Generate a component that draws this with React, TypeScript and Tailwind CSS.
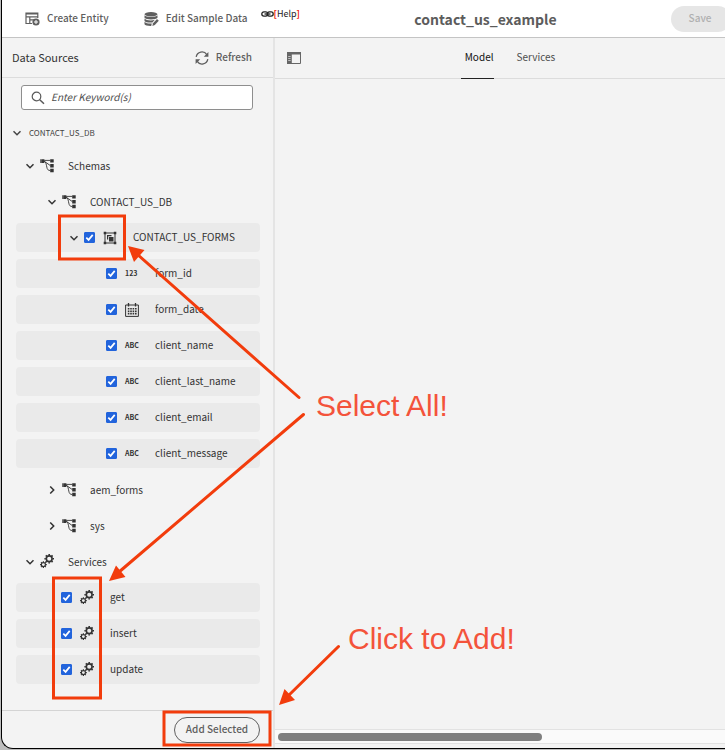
import type { ReactNode } from "react";

type IconProps = { className?: string };

function CreateEntityIcon({ className }: IconProps) {
  return (
    <svg viewBox="0 0 15 14" className={className} fill="none" stroke="currentColor">
      <path d="M7 11.500H1V1h11.800v5M1 2h11.800M1 4.800h11.800M4.800 5v6.500M5 7.800h4" strokeWidth="1.200" />
      <circle cx="11" cy="10" r="3.600" fill="currentColor" stroke="none" />
      <path d="M11 8v4M9 10h4" stroke="#fff" strokeWidth="1" />
    </svg>
  );
}

function SampleDataIcon({ className }: IconProps) {
  return (
    <svg viewBox="0 0 15 14" className={className} fill="currentColor">
      <ellipse cx="7" cy="2.200" rx="6.500" ry="2.200" />
      <path d="M.5 3.300c1.500 2.200 11.500 2.200 13 0v2.500c-1.500 2.300-11.500 2.300-13 0z" />
      <path d="M.5 6.500c1.500 2.100 7.300 2.400 10.300 1.300L8.400 10.500c-3.300.3-6.900 0-7.900-1.500z" />
      <path d="M.5 9.700c1 1.500 4.500 2 7.300 1.800l-.6 2.400C4 14 1 13.400.5 12.200z" />
      <path d="M8.400 13.900l.6-2.700 4-4.200 1.800 1.700-4 4.200z" />
    </svg>
  );
}

function RefreshIcon({ className }: IconProps) {
  return (
    <svg viewBox="0 0 14 14" className={className} fill="none" stroke="currentColor" strokeWidth="1.300">
      <path d="M1.200 5.800A5.800 5.800 0 0 1 11.800 3.600M12.800 8.200A5.800 5.800 0 0 1 2.200 10.400" />
      <path d="M13.400 1v4.800H8.800zM.6 13V8.200h4.600z" fill="currentColor" stroke="none" />
    </svg>
  );
}

function SearchIcon({ className }: IconProps) {
  return (
    <svg viewBox="0 0 14 14" className={className} fill="none" stroke="currentColor" strokeWidth="1.200">
      <circle cx="5.500" cy="5.500" r="4.300" />
      <path d="M8.700 8.700l4.300 4.100" strokeWidth="1.500" />
    </svg>
  );
}

function RailIcon({ className }: IconProps) {
  return (
    <svg viewBox="0 0 14 12" className={className} fill="none" stroke="currentColor">
      <path d="M.5.5h13v11H.5z" />
      <path d="M0 0h14v2.500H0zM0 2h4.800v10H0z" fill="currentColor" stroke="none" />
      <path d="M1.200 4.500h2.400M1.200 6.500h2.400M1.200 8.500h2.400" stroke="#d8d8d8" strokeWidth=".8" />
    </svg>
  );
}

function LinkIcon({ className }: IconProps) {
  return (
    <svg viewBox="0 0 13 6" className={className} fill="none" stroke="currentColor" strokeWidth="1.300">
      <rect x=".8" y=".9" width="6" height="4.200" rx="2.100" />
      <rect x="6.200" y=".9" width="6" height="4.200" rx="2.100" />
      <path d="M3.500 3h6" />
    </svg>
  );
}

function Chevron({ open = true }: { open?: boolean }) {
  return (
    <svg
      viewBox="0 0 8 8"
      className="size-2 shrink-0"
      fill="none"
      stroke="currentColor"
      strokeWidth="1.500"
    >
      <path d={open ? "M.5 2.200L4 5.700l3.500-3.500" : "M2.200.5L5.700 4 2.200 7.500"} />
    </svg>
  );
}

function TreeIcon() {
  return (
    <svg viewBox="0 0 14 14" className="size-3.5 shrink-0" fill="currentColor">
      <path d="M1.200.2h3.200v3.800H1.200zM0 .2h.7v3.800H0zM10.200.3h3.500v3.300h-3.500zM10.200 5.100h3.500v3.300h-3.500zM10.200 9.800h3.500v3.500h-3.500z" />
      <path
        d="M4.200 1.400h6M4.200 2.200l6 4.300M4.200 2.200C6 3.100 6.300 5.600 6.800 8.100c.4 2.200 1.200 3.400 3.400 3.400"
        fill="none"
        stroke="currentColor"
        strokeWidth=".9"
      />
    </svg>
  );
}

function EntityIcon() {
  return (
    <svg viewBox="0 0 14 14" className="size-3.5 shrink-0" fill="currentColor">
      <path d="M2 2h10v10H2z" fill="none" stroke="currentColor" strokeWidth="1" />
      <path d="M.7.7h2.500v2.500H.7zM10.800.7h2.500v2.500h-2.500zM.7 10.800h2.500v2.500H.7zM10.800 10.800h2.500v2.500h-2.500z" />
      <path d="M4 4h4.500v1.200H5.200v3.300H4zM6 6h4.500v4.500H6z" />
    </svg>
  );
}

function CalendarIcon() {
  return (
    <svg viewBox="0 0 14 14" className="size-3.5 shrink-0" fill="none" stroke="currentColor">
      <path d="M.6 2h12.800v11.400H.6z" strokeWidth="1" />
      <path d="M3.500 0v3.500M10.500 0v3.500" strokeWidth="1.300" />
      <path d="M2.800 5.800h9M2.800 8.200h9M2.800 10.600h9" strokeWidth="1.600" strokeDasharray="1.600 .8" />
    </svg>
  );
}

function Gear({ cx, cy, r }: { cx: number; cy: number; r: number }) {
  return (
    <g transform={`translate(${cx} ${cy})`} stroke="currentColor">
      <circle r={r * 0.6} fill="none" strokeWidth={r * 0.34} />
      {[0, 45, 90, 135, 180, 225, 270, 315].map((angle) => (
        <path key={angle} d={`M0 ${-r * 0.7}V${-r}`} strokeWidth={r * 0.34} transform={`rotate(${angle})`} />
      ))}
    </g>
  );
}

function GearsIcon() {
  return (
    <svg viewBox="0 1 14 14" className="size-3.5 shrink-0 overflow-visible">
      <Gear cx={9.2} cy={4.8} r={4.8} />
      <Gear cx={3.4} cy={10.6} r={3.4} />
    </svg>
  );
}

function TypeTag({ children }: { children: ReactNode }) {
  return <span className="w-3.5 shrink-0 pb-0.5 text-[7px] leading-3 font-bold">{children}</span>;
}

function TreeRow({
  label,
  icon,
  indent,
  open,
  selectable = false,
}: {
  label: string;
  icon: ReactNode;
  indent: string;
  open?: boolean;
  selectable?: boolean;
}) {
  return (
    <li
      className={`flex h-[29px] items-center rounded-sm ${indent} ${selectable ? "bg-[#eaeaea]" : ""}`}
    >
      {open !== undefined && (
        <button type="button" aria-label={`Toggle ${label}`} className="mr-1.5 flex">
          <Chevron open={open} />
        </button>
      )}
      {selectable ? (
        <label className="flex items-center">
          <span className="mr-2 grid">
            <input
              type="checkbox"
              defaultChecked
              className="peer col-start-1 row-start-1 size-[11px] appearance-none rounded-[1px] border border-[#707070] bg-white checked:border-[#2264dc] checked:bg-[#2264dc]"
            />
            <svg
              viewBox="0 0 11 11"
              className="pointer-events-none invisible col-start-1 row-start-1 size-[11px] peer-checked:visible"
              fill="none"
              stroke="#fff"
              strokeWidth="1.700"
            >
              <path d="M2.300 5.600l2.300 2.300 4.100-5" />
            </svg>
          </span>
          {icon}
          <span className="pb-0.5 pl-4">{label}</span>
        </label>
      ) : (
        <span className="flex items-center">
          {icon}
          <span className="pl-3.5">{label}</span>
        </span>
      )}
    </li>
  );
}

function Toolbar() {
  return (
    <header className="flex h-[38px] shrink-0 items-center border-b border-[#c4c4c4] bg-white pl-[23px] text-[#5f5f5f]">
      <button type="button" className="flex shrink-0 items-center gap-[7px] font-medium">
        <CreateEntityIcon className="h-3.5 w-[15px]" />
        <span className="pb-0.5">Create Entity</span>
      </button>
      <button type="button" className="ml-[35px] flex shrink-0 items-center gap-[7px] font-medium">
        <SampleDataIcon className="h-3.5 w-[15px]" />
        <span className="pb-0.5">Edit Sample Data</span>
      </button>
      <a href="#help" className="ml-[13px] flex shrink-0 items-center pb-[9px] text-[9px] text-[#222]">
        <LinkIcon className="h-1.5 w-[13px]" />
        <span className="font-bold text-[#f01c0c]">[</span>
        Help
        <span className="font-bold text-[#f01c0c]">]</span>
      </a>
      <h1 className="flex-1 text-center text-[14px] font-bold text-[#5c5c5c]">contact_us_example</h1>
      <button
        type="button"
        disabled
        className="-mr-1.5 h-[26px] w-[60px] shrink-0 rounded-full bg-[#e6e6e6] pr-0.5 pb-0.5 font-medium text-[#b0b0b0]"
      >
        Save
      </button>
    </header>
  );
}

function Sidebar() {
  return (
    <aside className="flex w-[273px] shrink-0 flex-col border-r-2 border-[#e4e4e4]">
      <div className="flex h-10 items-center justify-between border-b border-[#dcdcdc] pr-[21px] pl-2.5">
        <h2 className="pb-0.5 text-[11px] text-[#333]">Data Sources</h2>
        <button type="button" className="flex items-center gap-[7px] font-medium text-[#5f5f5f]">
          <RefreshIcon className="size-3.5" />
          <span className="pb-0.5">Refresh</span>
        </button>
      </div>

      <div className="mt-[7px] mr-5 ml-[19px] flex h-[25px] items-center gap-1.5 rounded-[3px] border border-[#8e8e8e] bg-white px-[9px] text-[#5a5a5a]">
        <SearchIcon className="size-3.5 shrink-0" />
        <input
          type="search"
          aria-label="Search data sources"
          placeholder="Enter Keyword(s)"
          className="w-full min-w-0 pb-0.5 italic outline-none placeholder:text-[#4e4e4e]"
        />
      </div>

      <button
        type="button"
        className="mt-[15px] ml-[11px] flex items-center gap-2 self-start text-[8px] text-[#444]"
      >
        <Chevron />
        CONTACT_US_DB
      </button>

      <ul className="mt-2.5 mr-[13px] mb-[26px] ml-3.5 flex flex-1 flex-col gap-[7px] text-[#333]">
        <TreeRow label="Schemas" icon={<TreeIcon />} indent="pl-2.5" open />
        <TreeRow label="CONTACT_US_DB" icon={<TreeIcon />} indent="pl-8" open />
        <TreeRow label="CONTACT_US_FORMS" icon={<EntityIcon />} indent="pl-[54px]" open selectable />
        <TreeRow label="form_id" icon={<TypeTag>123</TypeTag>} indent="pl-[90px]" selectable />
        <TreeRow label="form_date" icon={<CalendarIcon />} indent="pl-[90px]" selectable />
        <TreeRow label="client_name" icon={<TypeTag>ABC</TypeTag>} indent="pl-[90px]" selectable />
        <TreeRow label="client_last_name" icon={<TypeTag>ABC</TypeTag>} indent="pl-[90px]" selectable />
        <TreeRow label="client_email" icon={<TypeTag>ABC</TypeTag>} indent="pl-[90px]" selectable />
        <TreeRow label="client_message" icon={<TypeTag>ABC</TypeTag>} indent="pl-[90px]" selectable />
        <TreeRow label="aem_forms" icon={<TreeIcon />} indent="pl-8" open={false} />
        <TreeRow label="sys" icon={<TreeIcon />} indent="pl-8" open={false} />
        <TreeRow label="Services" icon={<GearsIcon />} indent="pl-2.5" open />
        <TreeRow label="get" icon={<GearsIcon />} indent="pl-[45px]" selectable />
        <TreeRow label="insert" icon={<GearsIcon />} indent="pl-[45px]" selectable />
        <TreeRow label="update" icon={<GearsIcon />} indent="pl-[45px]" selectable />
      </ul>

      <div className="flex h-[38px] shrink-0 items-center justify-end border-t border-[#d4d4d4] pr-[13px]">
        <button
          type="button"
          className="h-[26px] w-[86px] rounded-full border border-[#606060] pb-0.5 font-medium text-[#5f5f5f]"
        >
          Add Selected
        </button>
      </div>
    </aside>
  );
}

function Workspace() {
  return (
    <main className="flex min-w-0 flex-1 flex-col">
      <div className="flex h-[41px] items-center border-b border-[#dcdcdc] pl-3">
        <button type="button" aria-label="Toggle side panel" className="text-[#666]">
          <RailIcon className="h-3 w-3.5" />
        </button>
        <nav className="flex h-[41px] flex-1 justify-center gap-[23px] pr-2.5">
          <a href="#model" className="flex items-center border-b border-[#222] pb-0.5 pl-1 text-[#111]">
            Model
          </a>
          <a href="#services" className="flex items-center border-b border-transparent pb-0.5 text-[#4c4c4c]">
            Services
          </a>
        </nav>
      </div>
      <div className="flex-1" />
      <div className="mb-1 h-[15px] border-y border-[#e2e2e2] bg-[#fafafa] py-[3px] pl-[3px]">
        <div className="h-2 w-[59%] rounded-full bg-[#7f7f7f]" />
      </div>
    </main>
  );
}

// Drawn over the page: frames round the tick boxes and arrows to the notes.
function Annotations() {
  return (
    <div className="pointer-events-none absolute inset-0 text-[30px] leading-9 text-[#f3533b]">
      <svg width="725" height="750" viewBox="0 0 725 750" className="absolute top-0 left-0 max-w-none">
        <g fill="none" stroke="#f23c0c" strokeWidth="3">
          <path d="M59.500 216h65v43h-65zM53.500 578h47v120h-47zM164 712h106v33H164z" />
          <path d="M299 397.500L138 255M303.500 414.500L119 572M338.500 646.500L288 696" strokeLinecap="round" />
        </g>
        <path
          d="M128 246l16.500 4-10.500 12zM109 581l7-15.500 9.500 11.500zM279 705l5.500-16 10.500 11z"
          fill="#f23c0c"
        />
      </svg>
      <span className="absolute top-[388px] left-[316px] whitespace-nowrap">Select All!</span>
      <span className="absolute top-[621px] left-[348px] whitespace-nowrap">Click to Add!</span>
    </div>
  );
}

export default function App() {
  return (
    <div className="relative flex min-h-screen flex-col overflow-hidden bg-[#bdbdbd] pb-px pl-px font-['Liberation_Sans',sans-serif]">
      <div className="flex flex-1 flex-col overflow-hidden rounded-bl-xl border-b border-l border-black bg-[#f3f3f3] font-['Noto_Sans_CJK_SC',sans-serif] text-[10px] leading-4">
        <Toolbar />
        <div className="flex flex-1">
          <Sidebar />
          <Workspace />
        </div>
      </div>
      <Annotations />
    </div>
  );
}
